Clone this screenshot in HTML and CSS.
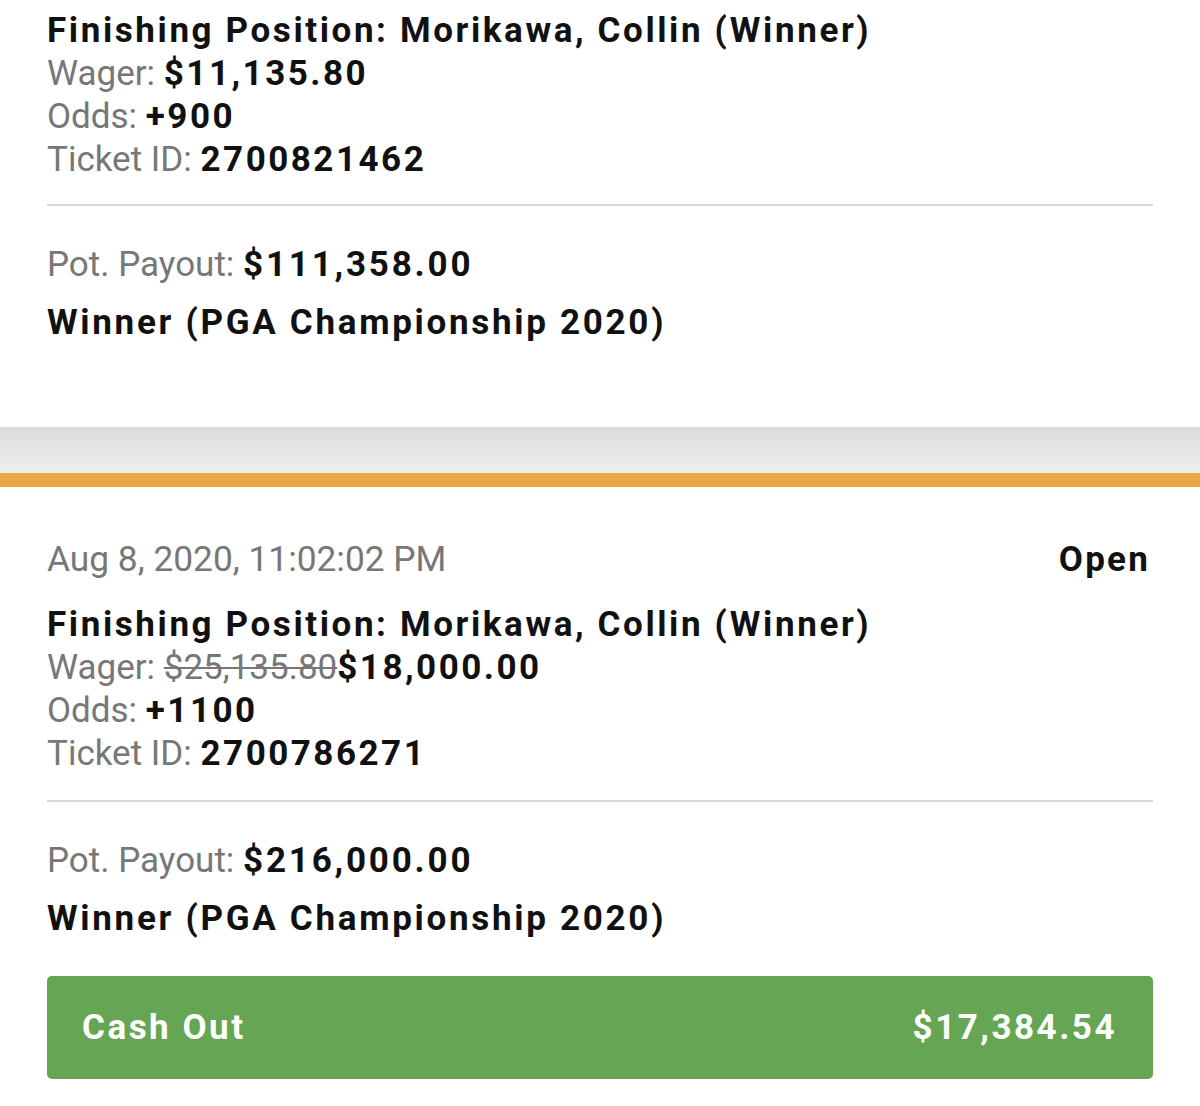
FILE: index.html
```html
<!DOCTYPE html>
<html>
<head>
<meta charset="utf-8">
<link rel="stylesheet" href="styles.css">
</head>
<body>
<div class="page">
  <section class="card card-top">
    <div class="info">
      <div class="title">Finishing Position: Morikawa, Collin (Winner)</div>
      <div class="line"><span class="label">Wager:</span> <span class="val">$11,135.80</span></div>
      <div class="line"><span class="label">Odds:</span> <span class="val">+900</span></div>
      <div class="line"><span class="label">Ticket ID:</span> <span class="val">2700821462</span></div>
    </div>
    <div class="divider"></div>
    <div class="payout"><span class="label">Pot. Payout:</span> <span class="val">$111,358.00</span></div>
    <div class="market">Winner (PGA Championship 2020)</div>
  </section>
  <div class="gap"></div>
  <div class="accent"></div>
  <section class="card card-bottom">
    <div class="head">
      <span class="date">Aug 8, 2020, 11:02:02 PM</span>
      <span class="status">Open</span>
    </div>
    <div class="info">
      <div class="title">Finishing Position: Morikawa, Collin (Winner)</div>
      <div class="line"><span class="label">Wager:</span> <span class="struck">$25,135.80</span><span class="val">$18,000.00</span></div>
      <div class="line"><span class="label">Odds:</span> <span class="val">+1100</span></div>
      <div class="line"><span class="label">Ticket ID:</span> <span class="val">2700786271</span></div>
    </div>
    <div class="divider divider-bottom"></div>
    <div class="payout"><span class="label">Pot. Payout:</span> <span class="val">$216,000.00</span></div>
    <div class="market">Winner (PGA Championship 2020)</div>
    <button class="cashout"><span>Cash Out</span><span>$17,384.54</span></button>
  </section>
</div>
</body>
</html>
```
FILE: styles.css
```css
html, body {
  margin: 0;
  padding: 0;
  background: #ffffff;
}
body {
  font-family: Roboto, "Noto Sans", "Liberation Sans", sans-serif;
  color: #111111;
}
.page {
  width: 1200px;
}
.card {
  padding: 0 47px;
}
.card-top {
  padding-top: 9px;
  height: 427px;
  box-sizing: border-box;
}
.info {
  display: flex;
  flex-direction: column;
}
.title, .market, .val, .status {
  font-weight: 700;
  letter-spacing: 2.5px;
  color: #111111;
}
.title {
  font-size: 35px;
  line-height: 43px;
  letter-spacing: 2.6px;
}
.line {
  font-size: 35px;
  line-height: 43px;
}
.label, .date {
  color: #777777;
  font-weight: 400;
  letter-spacing: 0;
}
.date {
  font-size: 35.3px;
}
.struck {
  color: #777777;
  text-decoration: line-through;
  text-decoration-thickness: 2px;
}
.divider {
  height: 2px;
  background: #d9d9d9;
  margin: 23px 0 0;
}
.divider-bottom {
  margin-top: 25px;
}
.payout {
  font-size: 35px;
  line-height: 43px;
  margin-top: 37px;
}
.payout .val {
  letter-spacing: 2.8px;
}
.market {
  font-size: 35px;
  line-height: 43px;
  margin-top: 15px;
  letter-spacing: 2.7px;
}
.gap {
  height: 46px;
  background: linear-gradient(#dcdcdc, #efeeef);
}
.accent {
  height: 14px;
  background: #e8a843;
}
.card-bottom {
  padding-top: 51px;
  padding-bottom: 28px;
}
.head {
  display: flex;
  justify-content: space-between;
  align-items: baseline;
  font-size: 35px;
  line-height: 43px;
  margin-bottom: 22px;
}
.status {
  font-size: 35px;
  padding-right: 3px;
  letter-spacing: 2.2px;
}
.cashout {
  display: flex;
  justify-content: space-between;
  align-items: center;
  width: 100%;
  height: 103px;
  margin-top: 36px;
  padding: 0 36px 0 35px;
  border: none;
  border-radius: 5px;
  background: #66a553;
  color: #ffffff;
  font-family: Roboto, "Noto Sans", "Liberation Sans", sans-serif;
  font-size: 35px;
  font-weight: 700;
  letter-spacing: 2.5px;
  box-sizing: border-box;
}
```
